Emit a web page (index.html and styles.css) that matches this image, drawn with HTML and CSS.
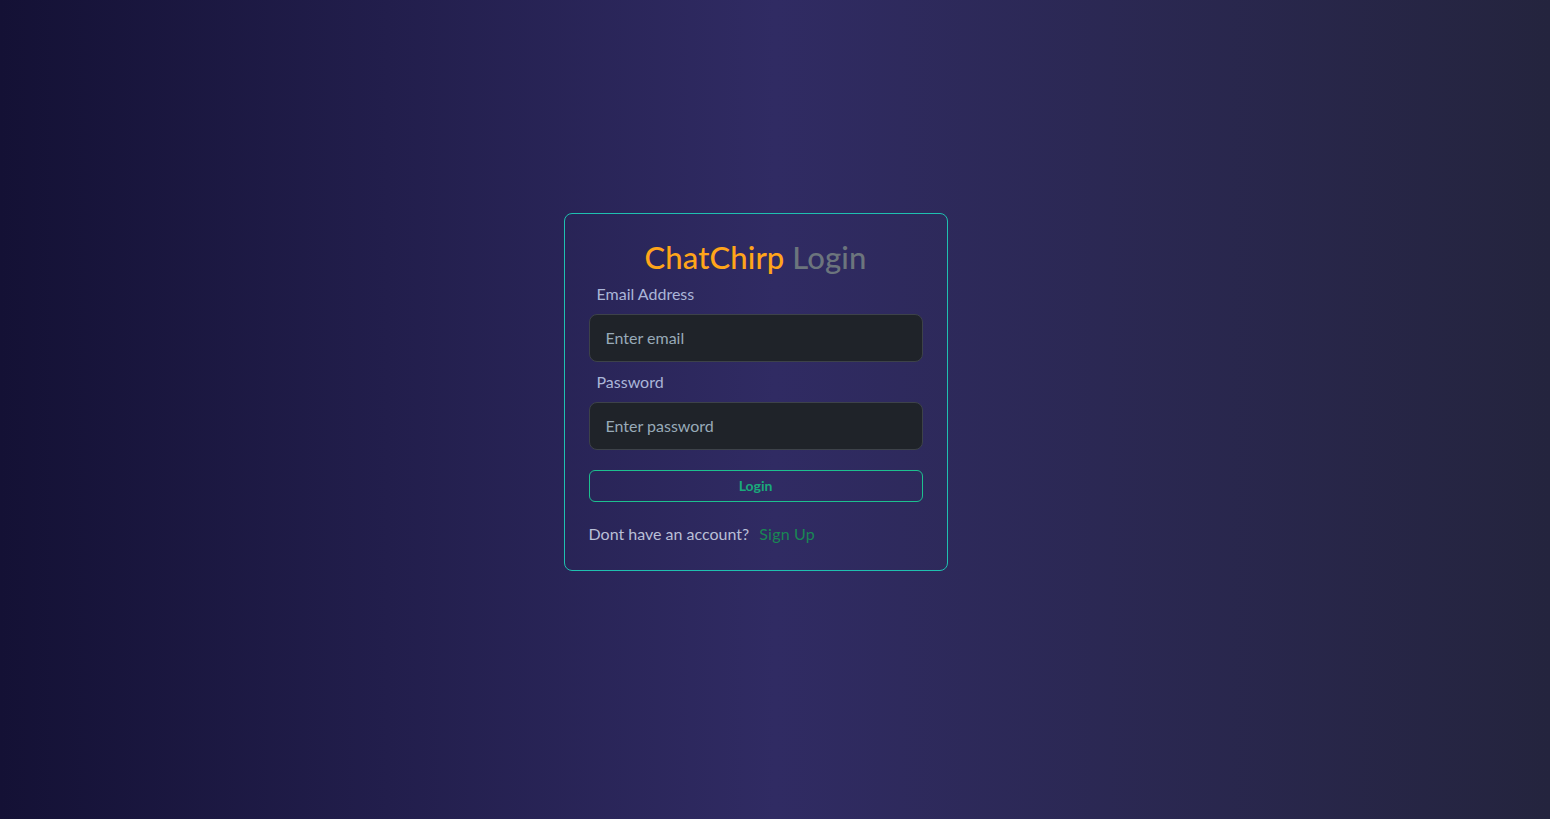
FILE: index.html
```html
<!DOCTYPE html>
<html lang="en">
<head>
<meta charset="utf-8">
<title>ChatChirp Login</title>
<link rel="stylesheet" href="styles.css">
</head>
<body>
<main class="page">
  <form class="card">
    <h3 class="title"><span class="brand">ChatChirp</span> <span class="muted">Login</span></h3>
    <label class="label" for="email">Email Address</label>
    <input class="input" id="email" type="email" placeholder="Enter email">
    <label class="label" for="password">Password</label>
    <input class="input" id="password" type="password" placeholder="Enter password">
    <button class="btn" type="button">Login</button>
    <p class="foot">Dont have an account? <a class="link" href="#">Sign Up</a></p>
  </form>
</main>
</body>
</html>
```
FILE: styles.css
```css
* { box-sizing: border-box; }
html, body { margin: 0; height: 100%; }
body {
  font-family: Lato, "Noto Sans", sans-serif;
  background: linear-gradient(90deg, #141135, #302b63, #24243e);
  color: #b4bcd8;
}
.page {
  min-height: 100%;
  display: flex;
  justify-content: center;
  align-items: flex-start;
  padding: 213px 39px 0 0;
}
.card {
  width: 384px;
  border: 1px solid #1fc0b0;
  border-radius: 8px;
  padding: 23px 24px 24px;
  display: flex;
  flex-direction: column;
}
.title {
  margin: 0 0 5px;
  text-align: center;
  font-size: 31px;
  font-weight: 500;
  line-height: 40px;
  letter-spacing: 0.1px;
}
.brand { color: #ffa51a; }
.muted { color: #6c757d; }
.label {
  font-size: 16px;
  line-height: 24px;
  padding-left: 8px;
  margin-bottom: 8px;
  color: #aab5d8;
}
.input {
  height: 48px;
  width: 100%;
  background: #1f2329;
  border: 1px solid #3d4249;
  border-radius: 8px;
  padding: 0 16px 2px;
  font-family: inherit;
  font-size: 16px;
  color: #dee2e6;
  margin-bottom: 8px;
}
.input::placeholder { color: #98aab8; }
.btn {
  margin-top: 12px;
  height: 32px;
  width: 100%;
  background: transparent;
  border: 1px solid #1dc08f;
  border-radius: 6px;
  color: #1aa97b;
  font-family: inherit;
  font-weight: 700;
  font-size: 14px;
  padding: 0 0 2px;
}
.foot {
  margin: 20px 0 0;
  font-size: 16px;
  line-height: 24px;
  color: #b9bfd6;
}
.link {
  color: #198754;
  text-decoration: none;
  margin-left: 6px;
  letter-spacing: 0.2px;
}
```
